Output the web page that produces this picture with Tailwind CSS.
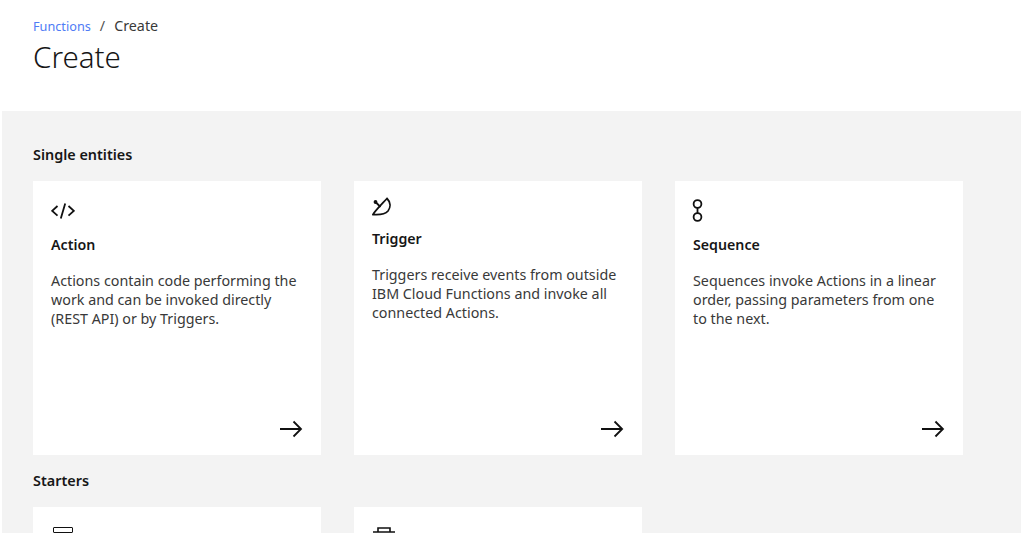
<!DOCTYPE html>
<html lang="en">

<head>
    <meta charset="UTF-8">
    <meta name="viewport" content="width=device-width, initial-scale=1.0">
    <script src="https://cdn.jsdelivr.net/npm/@tailwindcss/browser@4"></script>
    <title>Create</title>
</head>

<body class="bg-white h-[535px] overflow-hidden font-['Noto_Sans',sans-serif] text-[#161616]">
    <!-- header -->
    <div class="h-[111px] pl-[33px] pt-[17px]">
        <div class="flex items-center h-[18px] text-[14.3px] leading-[18px]">
            <a class="text-[12.7px] text-[#4f7cf5]">Functions</a>
            <span class="ml-[9px] text-[#525252]">/</span>
            <span class="ml-[9px] text-[#393939]">Create</span>
        </div>
        <h1 class="mt-[4px] text-[29.5px] leading-[36px] font-light">Create</h1>
    </div>

    <!-- main -->
    <div class="mx-[2px] w-[1019px] h-[422px] bg-[#f3f3f3] pl-[31px] overflow-hidden">
        <h2 class="pt-[35px] h-[70px] text-[14.4px] leading-[18px] font-semibold">Single entities</h2>
        <div class="flex gap-[33px]">
            <div class="relative w-[288px] h-[274px] bg-white px-[18px] pt-[22px]">
                <svg class="w-[24px] h-[16px]" viewBox="0 0 24 16" fill="none" stroke="#111" stroke-width="1.8">
                    <path d="M6.5 3 1.2 7.8l5.3 4.8M17.5 3l5.3 4.8-5.3 4.8M14.2 .5 9.8 15.5" />
                </svg>
                <h3 class="mt-[17px] text-[14.2px] leading-[18px] font-semibold">Action</h3>
                <p class="mt-[17px] text-[14.3px] leading-[19px] text-[#393939]">Actions contain code performing the work and can be invoked directly (REST API) or by Triggers.</p>
                <svg class="absolute right-[18px] bottom-[16px] w-[24px] h-[20px]" viewBox="0 0 24 20" fill="none" stroke="#111" stroke-width="1.8">
                    <path d="M1 10h21M14.500 2.500 22 10l-7.500 7.500" />
                </svg>
            </div>
            <div class="relative w-[288px] h-[274px] bg-white px-[18px] pt-[16px]">
                <svg class="w-[20px] h-[19px]" viewBox="0 0 20 19" fill="none" stroke="#111" stroke-width="1.8">
                    <path d="M15 1.500C18.500 5 19 10 16 14c-3 3.500-8 4-15 3.500C3 14 9 8 15 1.500Z" />
                    <path d="M8.500 10 4 5.500" />
                    <circle cx="3.500" cy="5" r="1" fill="#111" />
                </svg>
                <h3 class="mt-[14px] text-[14.2px] leading-[18px] font-semibold">Trigger</h3>
                <p class="mt-[17px] text-[14.3px] leading-[19px] text-[#393939]">Triggers receive events from outside IBM Cloud Functions and invoke all connected Actions.</p>
                <svg class="absolute right-[18px] bottom-[16px] w-[24px] h-[20px]" viewBox="0 0 24 20" fill="none" stroke="#111" stroke-width="1.8">
                    <path d="M1 10h21M14.500 2.500 22 10l-7.500 7.500" />
                </svg>
            </div>
            <div class="relative w-[288px] h-[274px] bg-white px-[18px] pt-[17px]">
                <svg class="w-[11px] h-[25px] -ml-[1px]" viewBox="0 0 11 25" fill="none" stroke="#111" stroke-width="1.800">
                    <circle cx="5.500" cy="6" r="3.900" />
                    <circle cx="5.500" cy="19" r="3.900" />
                    <path d="M5.500 10v5" />
                </svg>
                <h3 class="mt-[13px] text-[14.2px] leading-[18px] font-semibold">Sequence</h3>
                <p class="mt-[17px] text-[14.3px] leading-[19px] text-[#393939]">Sequences invoke Actions in a linear order, passing parameters from one to the next.</p>
                <svg class="absolute right-[18px] bottom-[16px] w-[24px] h-[20px]" viewBox="0 0 24 20" fill="none" stroke="#111" stroke-width="1.8">
                    <path d="M1 10h21M14.500 2.500 22 10l-7.500 7.500" />
                </svg>
            </div>
        </div>
        <h2 class="pt-[17px] h-[52px] text-[14.4px] leading-[18px] font-semibold">Starters</h2>
        <div class="flex gap-[33px]">
            <div class="w-[288px] h-[274px] bg-white pl-[20px] pt-[20px]">
                <div class="w-[20px] h-[6px] border-[1.6px] border-[#111] rounded-[1px]"></div>
            </div>
            <div class="w-[288px] h-[274px] bg-white pl-[19px] pt-[20px]">
                <svg class="w-[22px] h-[6px] block" viewBox="0 0 22 6" fill="none" stroke="#111" stroke-width="1.600">
                    <path d="M0 5h22M5 5V1h12v4" />
                </svg>
            </div>
        </div>
    </div>
</body>

</html>
